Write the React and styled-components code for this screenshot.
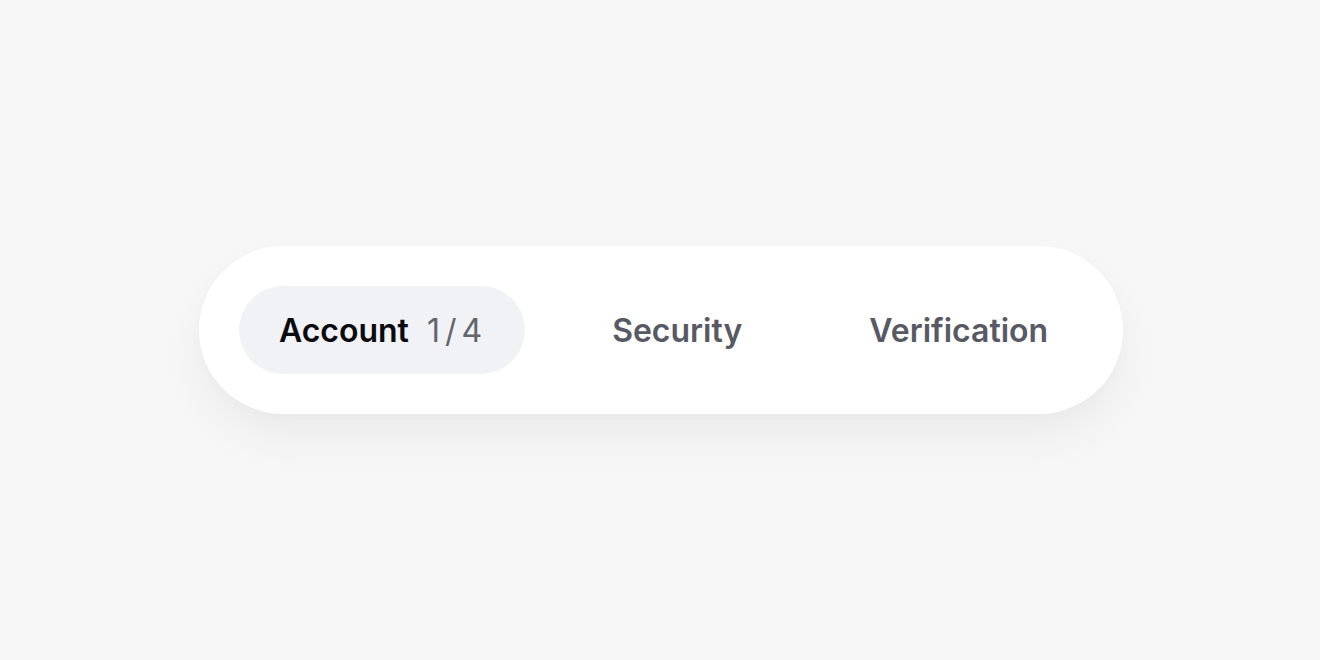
import React, { useState } from "react";
import styled, { createGlobalStyle } from "styled-components";

const GlobalStyle = createGlobalStyle`
  html, body {
    margin: 0;
    padding: 0;
    background: #f7f7f7;
  }
  #root {
    min-height: 100vh;
  }
`;

const Page = styled.div`
  font-family: Inter, "Noto Sans", sans-serif;
  height: 100vh;
  display: flex;
  align-items: center;
  justify-content: center;
  padding-left: 2px;
  box-sizing: border-box;
`;

const TabBar = styled.div`
  display: flex;
  align-items: center;
  gap: 47px;
  padding: 40px 35px 40px 40px;
  background: #ffffff;
  border-radius: 84px;
  box-shadow: 0 24px 50px rgba(20, 24, 40, 0.05), 0 4px 14px rgba(20, 24, 40, 0.02);
`;

const Tab = styled.button`
  display: flex;
  align-items: center;
  gap: 18px;
  height: 88px;
  padding: 0 ${(p) => (p.$active ? "43px" : "40px")} 0 40px;
  border: none;
  border-radius: 44px;
  background: ${(p) => (p.$active ? "#f1f2f5" : "transparent")};
  color: ${(p) => (p.$active ? "#0b0b0f" : "#575a64")};
  font-family: inherit;
  font-size: 32px;
  font-weight: 600;
  cursor: pointer;
`;

const Count = styled.span`
  color: #62656e;
  font-weight: 400;
  letter-spacing: 5px;
  margin-right: -5px;
`;

const steps = ["Account", "Security", "Verification"];

export default function App() {
  const [active, setActive] = useState(0);

  return (
    <>
      <GlobalStyle />
      <Page>
        <TabBar>
          {steps.map((step, i) => (
            <Tab key={step} $active={i === active} onClick={() => setActive(i)}>
              {step}
              {i === active && <Count>{`${i + 1}/${steps.length + 1}`}</Count>}
            </Tab>
          ))}
        </TabBar>
      </Page>
    </>
  );
}
